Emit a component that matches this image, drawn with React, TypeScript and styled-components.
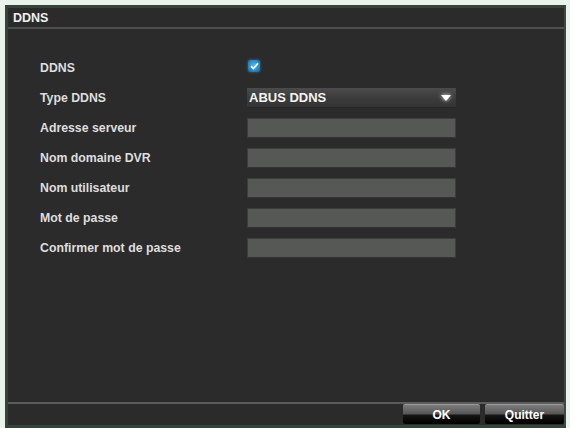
import React from 'react';
import styled, { createGlobalStyle } from 'styled-components';

const GlobalStyle = createGlobalStyle`
  html, body {
    margin: 0;
    padding: 0;
    background: #e9f2eb;
    font-family: "Liberation Sans", Arial, sans-serif;
  }
`;

const Page = styled("div")`
  width: 570px;
  height: 428px;
  padding: 5px 0 0 5px;
  box-sizing: border-box;
  overflow: hidden;
`;

const Window = styled("div")`
  width: 561px;
  height: 423px;
  box-sizing: border-box;
  border: 3px solid #364339;
  border-right: 2px solid #3e4a41;
  background: #2b2b2b;
  display: flex;
  flex-direction: column;
`;

const TitleBar = styled("div")`
  height: 19px;
  display: flex;
  align-items: center;
  padding-left: 5px;
  color: #f0f0f0;
  font-size: 12.5px;
  font-weight: bold;
  background: #2a2b2a;
  border-bottom: 2px solid #4e504e;
`;

const Body = styled("div")`
  flex: 1;
  padding: 29px 0 0 32px;
  display: flex;
  flex-direction: column;
  gap: 10px;
`;

const Row = styled("div")`
  display: grid;
  grid-template-columns: 207px 209px;
  height: 20px;
  align-items: center;
`;

const Label = styled("div")`
  color: #dedede;
  font-size: 12.3px;
  font-weight: bold;
`;

const CheckBox = styled("div")`
  width: 12px;
  height: 12px;
  margin-left: 1px;
  margin-top: -4px;
  border-radius: 2px;
  background: radial-gradient(circle at 50% 45%, #55b8ee 0%, #2a86c4 60%, #1b5f8f 100%);
  box-shadow: 0 0 3px rgba(60, 160, 230, 0.6);
  display: flex;
  align-items: center;
  justify-content: center;
`;

const Select = styled("div")`
  height: 20px;
  box-sizing: border-box;
  background: linear-gradient(#4a4b4a, #3a3b3a 55%, #333433);
  border-bottom: 1px solid #262626;
  display: flex;
  align-items: center;
  justify-content: space-between;
  padding: 0 5px 0 2px;
  color: #f4f4f4;
  font-size: 13px;
  font-weight: bold;
`;

const Arrow = styled("div")`
  width: 0;
  height: 0;
  border-left: 5px solid transparent;
  border-right: 5px solid transparent;
  border-top: 6px solid #ffffff;
  filter: drop-shadow(0 0 2px rgba(255, 255, 255, 0.9));
`;

const Field = styled("div")`
  height: 20px;
  box-sizing: border-box;
  background: #555855;
  border: 1px solid #3c3e3c;
  border-bottom-color: #323432;
`;

const Footer = styled("div")`
  border-top: 2px solid #5c5e5c;
  display: flex;
  justify-content: flex-end;
  gap: 5px;
  padding-bottom: 1px;
`;

const Button = styled("div")<{ $w: number }>`
  width: ${(p) => p.$w}px;
  height: 20px;
  box-sizing: border-box;
  border-radius: 2px;
  background: linear-gradient(#7a7b7a 0%, #575857 45%, #141414 55%, #000000 100%);
  border-top: 1px solid #9a9a9a;
  color: #ffffff;
  font-size: 12px;
  font-weight: bold;
  display: flex;
  align-items: center;
  justify-content: center;
`;

const fields = [
  "Adresse serveur",
  "Nom domaine DVR",
  "Nom utilisateur",
  "Mot de passe",
  "Confirmer mot de passe",
];

export default function App() {
  return (
    <>
      <GlobalStyle />
      <Page>
        <Window>
          <TitleBar>DDNS</TitleBar>
          <Body>
            <Row>
              <Label>DDNS</Label>
              <CheckBox>
                <svg width="9" height="8" viewBox="0 0 9 8">
                  <path d="M1 4.2 L3.5 6.5 L8 1.3" stroke="#ffffff" strokeWidth="1.6" fill="none" />
                </svg>
              </CheckBox>
            </Row>
            <Row>
              <Label>Type DDNS</Label>
              <Select>
                ABUS DDNS
                <Arrow />
              </Select>
            </Row>
            {fields.map((f) => (
              <Row key={f}>
                <Label>{f}</Label>
                <Field />
              </Row>
            ))}
          </Body>
          <Footer>
            <Button $w={77}>OK</Button>
            <Button $w={79}>Quitter</Button>
          </Footer>
        </Window>
      </Page>
    </>
  );
}
